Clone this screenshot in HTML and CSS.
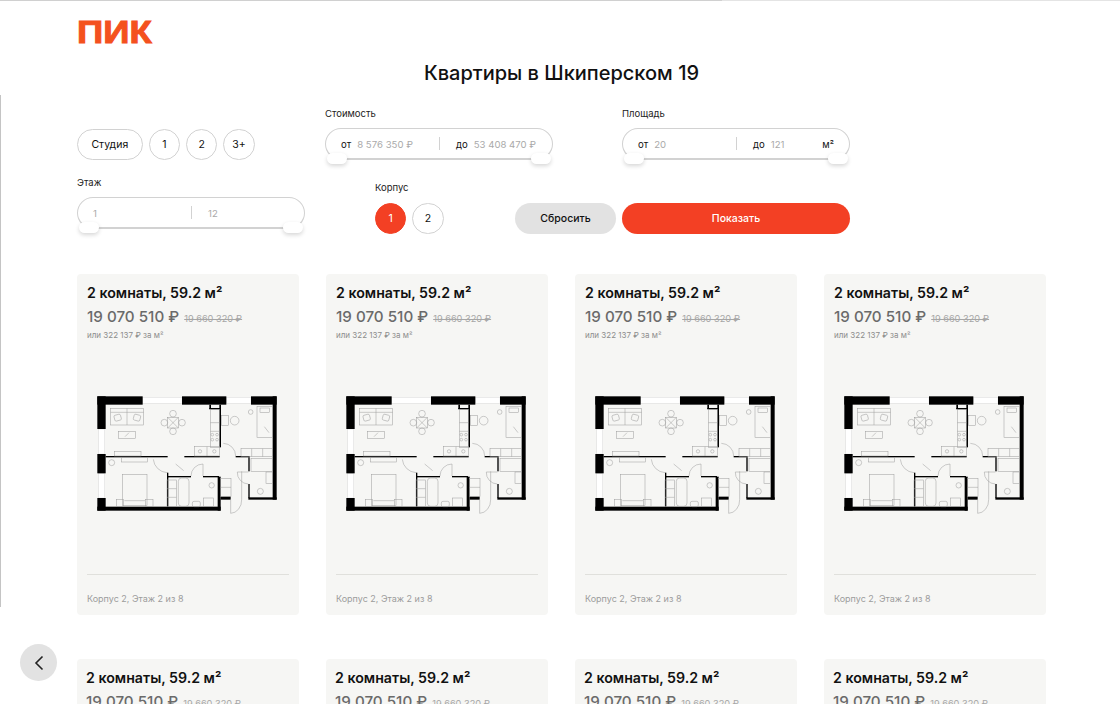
FILE: index.html
```html
<!DOCTYPE html>
<html lang="ru">
<head>
    <meta charset="UTF-8">
    <meta name="viewport" content="width=device-width, initial-scale=1.0">
    <title>Квартиры в Шкиперском 19</title>
    <link rel="stylesheet" href="styles.css">
</head>
<body>

    <svg class="defs" width="0" height="0">
        <symbol id="plan" viewBox="0 0 615 420">
            <!-- windows -->
            <g fill="#fff" stroke="#d8d8d8" stroke-width="1.5">
                <rect x="173" y="40" width="118" height="18"/>
                <rect x="424" y="40" width="74" height="18"/>
                <rect x="41" y="135" width="18" height="75"/>
                <rect x="41" y="268" width="18" height="74"/>
            </g>
            <!-- walls -->
            <g fill="#000">
                <rect x="37" y="37" width="136" height="25"/>
                <rect x="291" y="37" width="133" height="25"/>
                <rect x="498" y="37" width="77" height="25"/>
                <rect x="37" y="37" width="25" height="98"/>
                <rect x="37" y="210" width="25" height="58"/>
                <rect x="37" y="342" width="25" height="38"/>
                <rect x="37" y="368" width="370" height="12"/>
                <rect x="563" y="37" width="12" height="310"/>
                <rect x="490" y="340" width="85" height="7"/>
                <rect x="398" y="278" width="9" height="102"/>
                <rect x="407" y="338" width="30" height="9"/>
                <rect x="62" y="216" width="186" height="4"/>
                <rect x="298" y="216" width="106" height="4"/>
                <rect x="452" y="216" width="42" height="4"/>
                <rect x="403" y="62" width="5" height="128"/>
                <rect x="373" y="62" width="5" height="13"/>
                <rect x="373" y="72" width="32" height="4"/>
                <rect x="490" y="220" width="4" height="42"/>
                <rect x="490" y="300" width="4" height="42"/>
                <rect x="246" y="266" width="4" height="14"/>
                <rect x="246" y="276" width="72" height="4"/>
                <rect x="354" y="276" width="48" height="4"/>
                <rect x="246" y="276" width="4" height="92"/>
            </g>
            <!-- furniture and doors -->
            <g fill="none" stroke="#9a9a9a" stroke-width="1.5">
                <rect x="77" y="73" width="99" height="50"/>
                <path d="M77 85H176M126 73V123"/>
                <rect x="88" y="92" width="20" height="18" rx="4" transform="rotate(-15 98 101)"/>
                <rect x="146" y="92" width="20" height="18" rx="4" transform="rotate(15 156 101)"/>
                <rect x="100" y="142" width="52" height="22"/>
                <path d="M120 158L132 146"/>
                <rect x="248" y="100" width="32" height="32"/>
                <circle cx="264" cy="89" r="10"/>
                <circle cx="264" cy="142" r="10"/>
                <circle cx="238" cy="116" r="10"/>
                <circle cx="291" cy="116" r="10"/>
                <path d="M248 100L280 132M280 100L248 132"/>
                <rect x="88" y="202" width="80" height="14"/>
                <rect x="110" y="220" width="78" height="14"/>
                <rect x="376" y="76" width="27" height="114"/>
                <path d="M376 116H403M376 142H403"/>
                <circle cx="382" cy="152" r="4"/>
                <circle cx="396" cy="152" r="4"/>
                <circle cx="382" cy="167" r="4"/>
                <circle cx="396" cy="167" r="4"/>
                <rect x="329" y="188" width="74" height="28"/>
                <path d="M366 188V216"/>
                <circle cx="345" cy="202" r="5"/>
                <circle cx="388" cy="202" r="5"/>
                <rect x="410" y="95" width="20" height="30"/>
                <circle cx="449" cy="110" r="13"/>
                <rect x="516" y="68" width="47" height="92"/>
                <rect x="525" y="72" width="28" height="14"/>
                <path d="M538 128L552 146"/>
                <rect x="468" y="194" width="95" height="24"/>
                <path d="M500 194V218M533 194V218"/>
                <rect x="498" y="224" width="65" height="38"/>
                <rect x="543" y="264" width="20" height="34"/>
                <circle cx="526" cy="322" r="9"/>
                <rect x="112" y="272" width="74" height="92"/>
                <rect x="94" y="347" width="22" height="20"/>
                <rect x="182" y="347" width="22" height="20"/>
                <path d="M118 350H180"/>
                <rect x="246" y="288" width="28" height="80"/>
                <path d="M246 314H274M246 340H274"/>
                <rect x="280" y="282" width="32" height="85" rx="10"/>
                <rect x="356" y="342" width="30" height="26"/>
                <rect x="322" y="352" width="24" height="16" rx="5"/>
                <circle cx="380" cy="304" r="8"/>
                <rect x="407" y="284" width="31" height="54"/>
                <path d="M407 310H438"/>
                <circle cx="80" cy="236" r="9"/>
                <circle cx="497" cy="84" r="7"/>
                <path d="M205 226A44 44 0 0 0 246 266M415 178A38 38 0 0 1 452 216M354 240A36 36 0 0 0 318 276M354 240V276M457 264A34 34 0 0 0 490 300M457 264H490"/>
                <path d="M437 347V388A34 40 0 0 0 470 347V262"/>
                <path d="M272 240L296 260"/>
            </g>
        </symbol>
    </svg>

    <div class="edge-top"><div class="edge-top-dark"></div></div>
    <div class="edge-left"></div>

    <div class="page">
        <div class="logo"><span>ПИК</span></div>
        <h1>Квартиры в Шкиперском 19</h1>

        <div class="filters">
            <div class="filter-row first-row">
                <div class="chips rooms">
                    <button class="chip wide">Студия</button>
                    <button class="chip">1</button>
                    <button class="chip">2</button>
                    <button class="chip">3+</button>
                </div>
                <div class="range-group">
                    <label>Стоимость</label>
                    <div class="range">
                        <div class="range-part"><b>от</b><span>8 576 350 ₽</span></div>
                        <div class="range-part"><b>до</b><span>53 408 470 ₽</span></div>
                        <i class="handle left"></i>
                        <i class="handle right"></i>
                    </div>
                </div>
                <div class="range-group">
                    <label>Площадь</label>
                    <div class="range">
                        <div class="range-part"><b>от</b><span>20</span></div>
                        <div class="range-part"><b>до</b><span>121</span><b class="unit">м²</b></div>
                        <i class="handle left"></i>
                        <i class="handle right"></i>
                    </div>
                </div>
            </div>

            <div class="filter-row second-row">
                <div class="range-group">
                    <label>Этаж</label>
                    <div class="range">
                        <div class="range-part"><span>1</span></div>
                        <div class="range-part"><span>12</span></div>
                        <i class="handle left"></i>
                        <i class="handle right"></i>
                    </div>
                </div>
                <div class="korpus">
                    <label>Корпус</label>
                    <div class="chips">
                        <button class="chip active">1</button>
                        <button class="chip">2</button>
                    </div>
                </div>
                <div class="actions">
                    <button class="btn reset">Сбросить</button>
                    <button class="btn show">Показать</button>
                </div>
            </div>
        </div>

        <div class="cards">
            <div class="card">
                <h3>2 комнаты, 59.2 м²</h3>
                <div class="price">19 070 510 ₽ <s>19 660 320 ₽</s></div>
                <div class="per-meter">или 322 137 ₽ за м²</div>
                <svg class="plan"><use href="#plan"/></svg>
                <div class="card-foot">Корпус 2, Этаж 2 из 8</div>
            </div>
            <div class="card">
                <h3>2 комнаты, 59.2 м²</h3>
                <div class="price">19 070 510 ₽ <s>19 660 320 ₽</s></div>
                <div class="per-meter">или 322 137 ₽ за м²</div>
                <svg class="plan"><use href="#plan"/></svg>
                <div class="card-foot">Корпус 2, Этаж 2 из 8</div>
            </div>
            <div class="card">
                <h3>2 комнаты, 59.2 м²</h3>
                <div class="price">19 070 510 ₽ <s>19 660 320 ₽</s></div>
                <div class="per-meter">или 322 137 ₽ за м²</div>
                <svg class="plan"><use href="#plan"/></svg>
                <div class="card-foot">Корпус 2, Этаж 2 из 8</div>
            </div>
            <div class="card">
                <h3>2 комнаты, 59.2 м²</h3>
                <div class="price">19 070 510 ₽ <s>19 660 320 ₽</s></div>
                <div class="per-meter">или 322 137 ₽ за м²</div>
                <svg class="plan"><use href="#plan"/></svg>
                <div class="card-foot">Корпус 2, Этаж 2 из 8</div>
            </div>
            <div class="card lower">
                <h3>2 комнаты, 59.2 м²</h3>
                <div class="price">19 070 510 ₽ <s>19 660 320 ₽</s></div>
                <div class="per-meter">или 322 137 ₽ за м²</div>
            </div>
            <div class="card lower">
                <h3>2 комнаты, 59.2 м²</h3>
                <div class="price">19 070 510 ₽ <s>19 660 320 ₽</s></div>
                <div class="per-meter">или 322 137 ₽ за м²</div>
            </div>
            <div class="card lower">
                <h3>2 комнаты, 59.2 м²</h3>
                <div class="price">19 070 510 ₽ <s>19 660 320 ₽</s></div>
                <div class="per-meter">или 322 137 ₽ за м²</div>
            </div>
            <div class="card lower">
                <h3>2 комнаты, 59.2 м²</h3>
                <div class="price">19 070 510 ₽ <s>19 660 320 ₽</s></div>
                <div class="per-meter">или 322 137 ₽ за м²</div>
            </div>
        </div>
    </div>

    <button class="back">
        <svg width="12" height="16" viewBox="0 0 12 16"><path d="M9.5 1.5L3 8l6.5 6.5" fill="none" stroke="#222" stroke-width="1.6"/></svg>
    </button>

</body>
</html>
```

FILE: styles.css
```css
html, body {
    height: 704px;
    overflow: hidden;
}

body {
    margin: 0;
    font-family: Inter, "Noto Sans", sans-serif;
    color: #111;
    background: #fff;
}

.defs {
    position: absolute;
}

.edge-top {
    position: absolute;
    left: 0;
    top: 0;
    width: 100%;
    height: 1px;
    background: #e4e4e4;
}

.edge-top-dark {
    width: 722px;
    height: 1px;
    background: #d0d0d0;
}

.edge-left {
    position: absolute;
    left: 0;
    top: 95px;
    width: 1px;
    height: 512px;
    background: #c4c4c4;
}

.page {
    padding: 14px 74px 0 77px;
}

.logo {
    height: 36px;
    font-family: "Liberation Sans", sans-serif;
    font-size: 32px;
    font-weight: 700;
    line-height: 36px;
    color: #f4511e;
}

.logo span {
    display: inline-block;
    transform: scaleX(1.14);
    transform-origin: left center;
    -webkit-text-stroke: 1px #f4511e;
}

h1 {
    margin: 9px 0 0;
    font-size: 20px;
    font-weight: 500;
    line-height: 28px;
    text-align: center;
}

.filters {
    margin-top: 21px;
}

.filter-row {
    display: flex;
}

.first-row {
    height: 69px;
}

.second-row {
    height: 97px;
}

label {
    display: block;
    font-size: 9.5px;
    line-height: 12px;
    color: #222;
}

.rooms {
    width: 248px;
    padding-top: 21px;
    gap: 6.3px;
    align-items: flex-start;
}

.chips {
    display: flex;
    gap: 6px;
}

.chip {
    width: 31.3px;
    height: 31px;
    padding: 0;
    border: 1px solid #d2d2d2;
    border-radius: 16px;
    background: #fff;
    font-family: inherit;
    font-size: 10.5px;
    color: #111;
}

.chip.wide {
    width: 65.7px;
}

.chip.active {
    background: #f34024;
    border-color: #f34024;
    color: #fff;
}

.range-group {
    width: 228px;
    margin-right: 69px;
}

.second-row .range-group {
    margin-right: 70px;
}

.range-group label {
    margin-bottom: 8px;
}

.range {
    position: relative;
    display: flex;
    box-sizing: border-box;
    height: 32px;
    border: 1px solid #d2d2d2;
    border-bottom-width: 2px;
    border-radius: 16px;
    font-size: 9.6px;
}

.range-part {
    box-sizing: border-box;
    flex: 0 0 50%;
    min-width: 0;
    display: flex;
    align-items: center;
    gap: 6px;
    padding: 1px 0 0 15px;
    white-space: nowrap;
}

.range-part + .range-part {
    padding-left: 17px;
    padding-right: 15px;
    position: relative;
}

.range-part + .range-part::before {
    content: "";
    position: absolute;
    left: 0;
    top: 8px;
    height: 13px;
    width: 1px;
    background: #d2d2d2;
}

.range-part b {
    font-weight: 400;
    color: #111;
}

.range-part span {
    color: #aaa;
}

.range-part .unit {
    margin-left: auto;
}

.handle {
    position: absolute;
    top: 24px;
    width: 20px;
    height: 11px;
    border-radius: 6px;
    background: #fff;
    box-shadow: 0 2px 4px rgba(0, 0, 0, 0.16);
}

.handle.left {
    left: 1px;
}

.handle.right {
    right: 1px;
}

.korpus {
    padding-top: 5px;
    width: 140px;
}

.korpus label {
    margin-bottom: 9px;
}

.actions {
    display: flex;
    gap: 6px;
    padding-top: 26px;
    height: 31px;
}

.btn {
    height: 31px;
    border: none;
    border-radius: 16px;
    font-family: inherit;
    font-size: 10.5px;
    font-weight: 500;
}

.btn.reset {
    width: 101px;
    background: #e2e2e2;
    color: #111;
}

.btn.show {
    width: 228px;
    background: #f34024;
    color: #fff;
}

.cards {
    display: grid;
    grid-template-columns: repeat(4, 222px);
    column-gap: 27px;
    row-gap: 44px;
}

.card {
    display: flex;
    flex-direction: column;
    box-sizing: border-box;
    height: 341px;
    padding: 10px 10px 9px;
    border-radius: 4px;
    background: #f6f6f4;
}

.card.lower {
    padding-left: 9px;
}

.card h3 {
    margin: 0;
    font-size: 14.2px;
    font-weight: 600;
    line-height: 18px;
}

.price {
    margin-top: 5px;
    font-size: 15.2px;
    font-weight: 500;
    line-height: 20px;
    color: #6a6a6a;
    white-space: nowrap;
}

.price s {
    margin-left: 1px;
    font-size: 9.2px;
    font-weight: 400;
    color: #a6a6a6;
}

.per-meter {
    margin-top: 1px;
    font-size: 8px;
    line-height: 10px;
    color: #8c8c8c;
}

.plan {
    width: 205px;
    height: 140px;
    margin: 44px 0 0 -2px;
}

.card-foot {
    margin-top: auto;
    border-top: 1px solid #e0e0dc;
    padding-top: 17px;
    font-size: 9px;
    line-height: 14px;
    color: #9c9c9c;
}

.back {
    position: absolute;
    left: 20px;
    top: 644px;
    display: flex;
    align-items: center;
    justify-content: center;
    width: 37px;
    height: 37px;
    padding: 0;
    border: none;
    border-radius: 50%;
    background: #e2e2e2;
}
```
